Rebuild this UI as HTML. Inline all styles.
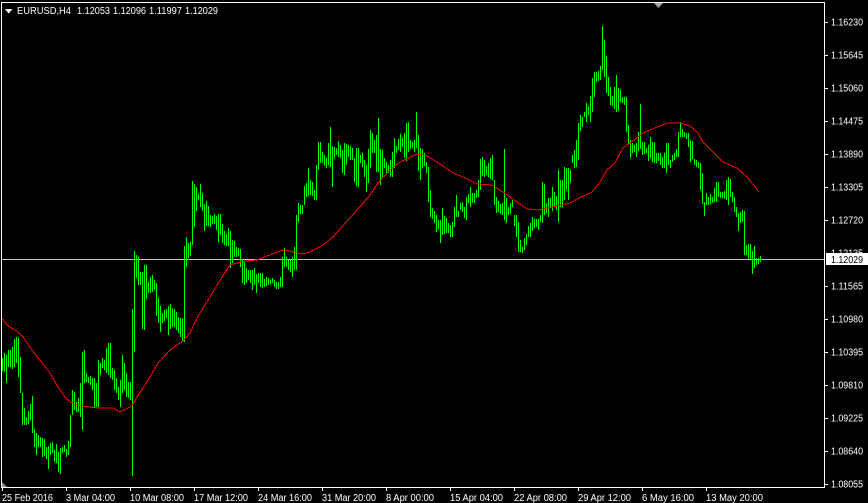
<!DOCTYPE html>
<html>
<head>
<meta charset="utf-8">
<style>
html,body{margin:0;padding:0;background:#000;width:868px;height:503px;overflow:hidden}
svg{display:block}
text{font-family:"Liberation Sans",sans-serif;font-size:10px;fill:#fff}
</style>
</head>
<body>
<svg width="868" height="503" viewBox="0 0 868 503" xmlns="http://www.w3.org/2000/svg">
<rect width="868" height="503" fill="#000"/>
<path d="M2 259.5H825" stroke="#c0c0c0" stroke-width="1" shape-rendering="crispEdges" fill="none"/>
<path shape-rendering="crispEdges" fill="none" stroke="#00ff00" stroke-width="1" d="M2.5 358V371M4.5 353V372M6.5 355V383M8.5 350V367M10.5 350V367M12.5 347V369M14.5 339V367M16.5 337V363M18.5 338V377M20.5 357V393M22.5 393V425M24.5 408V425M26.5 417V425M28.5 411V424M30.5 404V420M32.5 396V433M34.5 429V447M36.5 433V455M38.5 435V447M40.5 437V447M42.5 438V457M44.5 439V456M46.5 447V459M48.5 446V469M50.5 443V455M52.5 442V453M54.5 450V462M56.5 444V463M58.5 452V472M60.5 448V474M62.5 447V453M64.5 445V452M66.5 449V457M68.5 441V455M70.5 415V447M72.5 390V415M74.5 392V410M76.5 402V412M78.5 398V412M80.5 383V417M82.5 352V430M84.5 350V383M86.5 373V382M88.5 377V383M90.5 376V385M92.5 378V390M94.5 378V407M96.5 383V407M98.5 360V407M100.5 363V375M102.5 358V368M104.5 360V370M106.5 348V373M108.5 343V375M110.5 343V378M112.5 368V380M114.5 370V390M116.5 378V393M118.5 387V400M120.5 380V407M122.5 355V393M124.5 363V390M126.5 373V397M128.5 382V398M130.5 382V400M132.5 309V476M134.5 251V352M136.5 255V278M138.5 257V285M140.5 272V285M142.5 272V329M144.5 265V330M146.5 265V299M148.5 282V293M150.5 277V293M152.5 275V292M154.5 280V290M156.5 283V316M158.5 298V323M160.5 306V332M162.5 313V323M164.5 310V321M166.5 309V318M168.5 306V335M170.5 304V329M172.5 308V327M174.5 309V327M176.5 312V330M178.5 317V333M180.5 318V337M182.5 318V342M184.5 246V342M186.5 237V267M188.5 243V258M190.5 242V256M192.5 181V245M194.5 184V227M196.5 187V211M198.5 194V200M200.5 184V207M202.5 193V211M204.5 204V231M206.5 201V226M208.5 206V226M210.5 215V227M212.5 216V224M214.5 214V224M216.5 216V230M218.5 214V242M220.5 214V235M222.5 224V243M224.5 231V245M226.5 234V246M228.5 228V246M230.5 231V268M232.5 240V263M234.5 241V257M236.5 247V257M238.5 248V256M240.5 249V267M242.5 260V283M244.5 262V285M246.5 268V283M248.5 270V280M250.5 270V283M252.5 270V290M254.5 268V285M256.5 274V293M258.5 273V283M260.5 273V287M262.5 273V288M264.5 279V287M266.5 277V286M268.5 278V285M270.5 280V284M272.5 278V283M274.5 280V287M276.5 282V289M278.5 282V289M280.5 277V287M282.5 257V287M284.5 248V267M286.5 257V267M288.5 260V270M290.5 260V272M292.5 257V277M294.5 247V270M296.5 215V270M298.5 203V222M300.5 205V214M302.5 205V214M304.5 186V205M306.5 183V197M308.5 168V196M310.5 180V195M312.5 182V196M314.5 190V200M316.5 165V200M318.5 142V170M320.5 142V163M322.5 152V163M324.5 155V166M326.5 158V168M328.5 143V165M330.5 127V167M332.5 146V187M334.5 147V158M336.5 148V155M338.5 141V157M340.5 145V158M342.5 150V173M344.5 143V175M346.5 144V165M348.5 145V157M350.5 146V160M352.5 148V160M354.5 158V182M356.5 148V186M358.5 148V187M360.5 155V163M362.5 153V167M364.5 160V177M366.5 165V192M368.5 149V183M370.5 130V168M372.5 133V153M374.5 140V153M376.5 135V172M378.5 118V172M380.5 149V185M382.5 150V177M384.5 158V168M386.5 162V173M388.5 165V173M390.5 160V177M392.5 152V177M394.5 138V168M396.5 146V153M398.5 139V150M400.5 134V152M402.5 138V147M404.5 133V158M406.5 123V161M408.5 122V152M410.5 140V149M412.5 142V148M414.5 140V152M416.5 112V148M418.5 135V171M420.5 148V180M422.5 149V168M424.5 153V166M426.5 162V173M428.5 167V202M430.5 190V217M432.5 208V219M434.5 211V223M436.5 215V232M438.5 220V229M440.5 220V243M442.5 208V235M444.5 216V234M446.5 218V233M448.5 223V233M450.5 225V237M452.5 222V237M454.5 207V227M456.5 195V217M458.5 211V217M460.5 203V210M462.5 202V212M464.5 207V218M466.5 197V220M468.5 194V203M470.5 187V207M472.5 193V203M474.5 193V203M476.5 190V198M478.5 180V197M480.5 159V190M482.5 157V176M484.5 160V177M486.5 166V175M488.5 163V177M490.5 158V179M492.5 155V180M494.5 180V205M496.5 197V213M498.5 201V212M500.5 204V214M502.5 203V215M504.5 149V220M506.5 198V223M508.5 207V215M510.5 203V214M512.5 200V207M514.5 215V226M516.5 215V237M518.5 222V252M520.5 240V252M522.5 247V253M524.5 238V250M526.5 234V245M528.5 226V237M530.5 223V237M532.5 217V231M534.5 219V228M536.5 219V227M538.5 219V230M540.5 215V222M542.5 182V223M544.5 184V215M546.5 203V213M548.5 198V217M550.5 198V207M552.5 187V211M554.5 192V207M556.5 196V210M558.5 170V222M560.5 180V207M562.5 180V207M564.5 167V200M566.5 168V190M568.5 168V200M570.5 170V183M572.5 155V163M574.5 150V168M576.5 140V167M578.5 123V160M580.5 115V131M582.5 117V127M584.5 112V117M586.5 103V122M588.5 106V115M590.5 96V122M592.5 78V112M594.5 72V97M596.5 72V82M598.5 71V81M600.5 66V80M602.5 26V70M604.5 40V77M606.5 56V93M608.5 77V96M610.5 87V105M612.5 96V106M614.5 87V109M616.5 75V112M618.5 88V111M620.5 90V102M622.5 97V103M624.5 97V105M626.5 97V132M628.5 125V145M630.5 140V158M632.5 143V153M634.5 145V152M636.5 143V157M638.5 132V151M640.5 104V149M642.5 142V155M644.5 142V154M646.5 148V153M648.5 145V161M650.5 137V158M652.5 142V162M654.5 142V163M656.5 153V163M658.5 153V161M660.5 153V165M662.5 157V168M664.5 153V168M666.5 143V173M668.5 143V165M670.5 160V168M672.5 155V162M674.5 153V160M676.5 149V157M678.5 132V157M680.5 122V137M682.5 129V137M684.5 132V137M686.5 133V139M688.5 133V147M690.5 140V162M692.5 141V159M694.5 159V165M696.5 160V167M698.5 162V168M700.5 163V190M702.5 173V204M704.5 202V216M706.5 193V205M708.5 197V205M710.5 194V204M712.5 197V203M714.5 188V202M716.5 182V202M718.5 182V197M720.5 192V198M722.5 192V198M724.5 191V199M726.5 180V200M728.5 177V205M730.5 179V197M732.5 192V202M734.5 197V212M736.5 207V217M738.5 213V231M740.5 212V223M742.5 210V222M744.5 211V255M746.5 245V255M748.5 244V259M750.5 244V259M752.5 251V274M754.5 246V268M756.5 258V265M758.5 258V264M760.5 256V262"/>
<polyline shape-rendering="crispEdges" fill="none" stroke="#ff0000" stroke-width="1" points="2,318 7,325 13,329 18,332 23,337 30,347 38,358 50,373 58,387 65,397 70,402 80,406 90,407 98,408 113,408 120,412 132,406 137,397 143,388 150,377 158,363 170,350 183,341 190,333 197,318 213,292 222,277 230,265 245,261 257,260 267,256 283,250 290,251 297,253 302,254 310,252 323,245 333,237 350,218 370,195 378,183 390,170 400,162 417,154 427,156 437,162 453,173 463,177 477,184 492,185 503,192 517,202 527,209 538,210 557,206 570,203 577,199 592,192 600,182 607,170 615,163 623,148 630,143 643,133 657,127 668,123 680,123 690,126 698,133 703,142 723,162 737,168 747,177 759,192"/>
<g shape-rendering="crispEdges" fill="#fff">
<rect x="1" y="2" width="824" height="1"/>
<rect x="1" y="2" width="1" height="486"/>
<rect x="1" y="487" width="824" height="1"/>
<rect x="824" y="2" width="1" height="486"/>
<rect x="825" y="22" width="3" height="1"/><rect x="825" y="55" width="3" height="1"/><rect x="825" y="88" width="3" height="1"/><rect x="825" y="121" width="3" height="1"/><rect x="825" y="154" width="3" height="1"/><rect x="825" y="187" width="3" height="1"/><rect x="825" y="220" width="3" height="1"/><rect x="825" y="286" width="3" height="1"/><rect x="825" y="319" width="3" height="1"/><rect x="825" y="352" width="3" height="1"/><rect x="825" y="385" width="3" height="1"/><rect x="825" y="418" width="3" height="1"/><rect x="825" y="451" width="3" height="1"/><rect x="825" y="484" width="3" height="1"/>
<rect x="2" y="488" width="1" height="3"/><rect x="66" y="488" width="1" height="3"/><rect x="130" y="488" width="1" height="3"/><rect x="194" y="488" width="1" height="3"/><rect x="258" y="488" width="1" height="3"/><rect x="322" y="488" width="1" height="3"/><rect x="386" y="488" width="1" height="3"/><rect x="450" y="488" width="1" height="3"/><rect x="514" y="488" width="1" height="3"/><rect x="578" y="488" width="1" height="3"/><rect x="642" y="488" width="1" height="3"/><rect x="706" y="488" width="1" height="3"/>
</g>
<polygon points="5,9 12.5,9 8.7,13.5" fill="#fff"/>
<polygon points="654,3 663,3 658.5,8" fill="#9aa5ad"/>
<polygon points="2,482 2,487 7,487" fill="#8a939a"/>
<text x="17" y="14" textLength="54" lengthAdjust="spacingAndGlyphs">EURUSD,H4</text>
<text x="77" y="14" textLength="33" lengthAdjust="spacingAndGlyphs">1.12053</text>
<text x="113" y="14" textLength="33" lengthAdjust="spacingAndGlyphs">1.12096</text>
<text x="149" y="14" textLength="33" lengthAdjust="spacingAndGlyphs">1.11997</text>
<text x="185" y="14" textLength="33" lengthAdjust="spacingAndGlyphs">1.12029</text>
<g>
<text x="831" y="25.5" textLength="32" lengthAdjust="spacingAndGlyphs">1.16230</text>
<text x="831" y="58.5" textLength="32" lengthAdjust="spacingAndGlyphs">1.15645</text>
<text x="831" y="91.5" textLength="32" lengthAdjust="spacingAndGlyphs">1.15060</text>
<text x="831" y="124.5" textLength="32" lengthAdjust="spacingAndGlyphs">1.14475</text>
<text x="831" y="157.5" textLength="32" lengthAdjust="spacingAndGlyphs">1.13890</text>
<text x="831" y="190.5" textLength="32" lengthAdjust="spacingAndGlyphs">1.13305</text>
<text x="831" y="223.5" textLength="32" lengthAdjust="spacingAndGlyphs">1.12720</text>
<text x="831" y="256.5" textLength="32" lengthAdjust="spacingAndGlyphs">1.12135</text>
<text x="831" y="289.5" textLength="32" lengthAdjust="spacingAndGlyphs">1.11565</text>
<text x="831" y="322.5" textLength="32" lengthAdjust="spacingAndGlyphs">1.10980</text>
<text x="831" y="355.5" textLength="32" lengthAdjust="spacingAndGlyphs">1.10395</text>
<text x="831" y="388.5" textLength="32" lengthAdjust="spacingAndGlyphs">1.09810</text>
<text x="831" y="421.5" textLength="32" lengthAdjust="spacingAndGlyphs">1.09225</text>
<text x="831" y="454.5" textLength="32" lengthAdjust="spacingAndGlyphs">1.08640</text>
<text x="831" y="487.5" textLength="32" lengthAdjust="spacingAndGlyphs">1.08055</text>
</g>
<rect x="826" y="253" width="42" height="12" fill="#fff" shape-rendering="crispEdges"/>
<text x="831" y="263" textLength="32" lengthAdjust="spacingAndGlyphs" style="fill:#000">1.12029</text>
<g>
<text x="2" y="501" textLength="51" lengthAdjust="spacingAndGlyphs">25 Feb 2016</text>
<text x="66" y="501" textLength="49" lengthAdjust="spacingAndGlyphs">3 Mar 04:00</text>
<text x="130" y="501" textLength="54" lengthAdjust="spacingAndGlyphs">10 Mar 08:00</text>
<text x="194" y="501" textLength="54" lengthAdjust="spacingAndGlyphs">17 Mar 12:00</text>
<text x="258" y="501" textLength="54" lengthAdjust="spacingAndGlyphs">24 Mar 16:00</text>
<text x="322" y="501" textLength="54" lengthAdjust="spacingAndGlyphs">31 Mar 20:00</text>
<text x="386" y="501" textLength="48" lengthAdjust="spacingAndGlyphs">8 Apr 00:00</text>
<text x="450" y="501" textLength="53" lengthAdjust="spacingAndGlyphs">15 Apr 04:00</text>
<text x="514" y="501" textLength="53" lengthAdjust="spacingAndGlyphs">22 Apr 08:00</text>
<text x="578" y="501" textLength="53" lengthAdjust="spacingAndGlyphs">29 Apr 12:00</text>
<text x="642" y="501" textLength="52" lengthAdjust="spacingAndGlyphs">6 May 16:00</text>
<text x="706" y="501" textLength="57" lengthAdjust="spacingAndGlyphs">13 May 20:00</text>
</g>
</svg>
</body>
</html>
